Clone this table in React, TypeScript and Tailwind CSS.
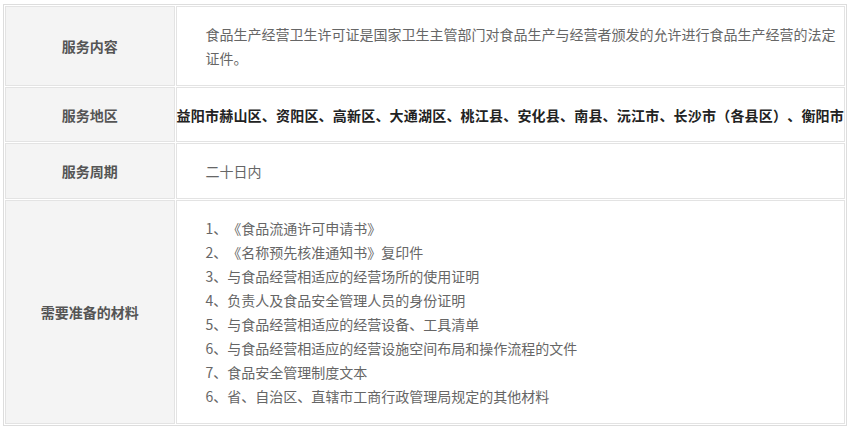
const materials = [
  "1、《食品流通许可申请书》",
  "2、《名称预先核准通知书》复印件",
  "3、与食品经营相适应的经营场所的使用证明",
  "4、负责人及食品安全管理人员的身份证明",
  "5、与食品经营相适应的经营设备、工具清单",
  "6、与食品经营相适应的经营设施空间布局和操作流程的文件",
  "7、食品安全管理制度文本",
  "6、省、自治区、直辖市工商行政管理局规定的其他材料",
];

function Label({ children }: { children: React.ReactNode }) {
  return (
    <td className="w-[170px] bg-[#f4f4f4] border border-[#e3e3e3] text-center align-middle text-[14px] font-bold text-[#555]">
      {children}
    </td>
  );
}

export default function App() {
  return (
    <div
      className="w-[850px] h-[428px] overflow-hidden bg-white pl-[3px] pt-[4px] [text-spacing-trim:space-all]"
      style={{ fontFamily: '"Noto Sans CJK SC", "Noto Sans", sans-serif' }}
    >
      <table className="w-[844px] border-separate border-spacing-[1px] border border-[#dddddd] leading-[24px]">
        <tbody>
          {/* 服务内容 */}
          <tr>
            <Label>服务内容</Label>
            <td className="h-[80px] border border-[#e3e3e3] pl-[29px] pr-[6px] align-middle text-[14px] text-[#666]">
              食品生产经营卫生许可证是国家卫生主管部门对食品生产与经营者颁发的允许进行食品生产经营的法定证件。
            </td>
          </tr>

          {/* 服务地区 */}
          <tr>
            <Label>服务地区</Label>
            <td className="h-[55px] border border-[#e3e3e3] align-middle whitespace-nowrap text-center text-[14px] font-bold tracking-[0.2px] text-[#222]">
              益阳市赫山区、资阳区、高新区、大通湖区、桃江县、安化县、南县、沅江市、长沙市（各县区）、衡阳市
            </td>
          </tr>

          {/* 服务周期 */}
          <tr>
            <Label>服务周期</Label>
            <td className="h-[56px] border border-[#e3e3e3] pl-[29px] align-middle text-[14px] text-[#666]">
              二十日内
            </td>
          </tr>

          {/* 需要准备的材料 */}
          <tr>
            <Label>需要准备的材料</Label>
            <td className="border border-[#e3e3e3] pl-[29px] py-[15px] align-middle text-[14px] text-[#666]">
              {materials.map((m, i) => (
                <div key={i}>{m}</div>
              ))}
            </td>
          </tr>
        </tbody>
      </table>
    </div>
  );
}
